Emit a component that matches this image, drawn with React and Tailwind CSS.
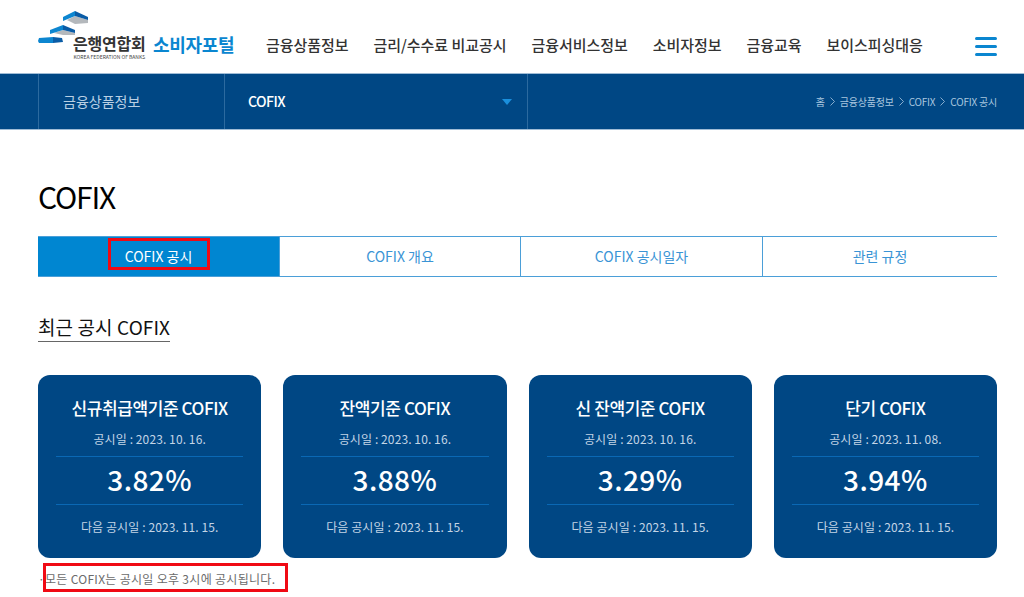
import React from "react";

const navItems = ["금융상품정보", "금리/수수료 비교공시", "금융서비스정보", "소비자정보", "금융교육", "보이스피싱대응"];
const tabs = ["COFIX 공시", "COFIX 개요", "COFIX 공시일자", "관련 규정"];
const crumbs = ["금융상품정보", "COFIX", "COFIX 공시"];
const cards = [
  { title: "신규취급액기준 COFIX", date: "2023. 10. 16.", rate: "3.82", next: "2023. 11. 15." },
  { title: "잔액기준 COFIX", date: "2023. 10. 16.", rate: "3.88", next: "2023. 11. 15." },
  { title: "신 잔액기준 COFIX", date: "2023. 10. 16.", rate: "3.29", next: "2023. 11. 15." },
  { title: "단기 COFIX", date: "2023. 11. 08.", rate: "3.94", next: "2023. 11. 15." },
];

function Logo() {
  return (
    <svg width="50" height="33" viewBox="0 0 50 33" className="block">
      <polygon points="29,9 37,5 50,9 50,12 37,13" fill="#b4b8bc" />
      <polygon points="25,6 37,0 37,5 25,10" fill="#0d86d0" />
      <polygon points="37,0 50,6 50,9 37,5" fill="#0a5ca6" />
      <polygon points="16,22 25,19 37,22 37,24 25,24" fill="#b4b8bc" />
      <polygon points="12,19 25,14 25,19 12,23" fill="#0d86d0" />
      <polygon points="25,14 37,19 37,22 25,19" fill="#0a5ca6" />
      <polygon points="1,27 15,26 15,32 1,32 0,30" fill="#0d86d0" />
      <polygon points="15,26 24,27 25,31 15,32" fill="#0a5ca6" />
    </svg>
  );
}

function Chevron() {
  return (
    <svg width="5" height="9" viewBox="0 0 5 9" fill="none" stroke="#a9c6df" strokeWidth="0.8">
      <path d="M0.5 0.5 L4.5 4.5 L0.5 8.5" />
    </svg>
  );
}

function Card({ title, date, rate, next }) {
  return (
    <div className="h-[183px] rounded-[12px] bg-[#004784] px-[18px] pt-[21px] text-center">
      <h3 className="text-[17px] leading-[24px] font-medium tracking-[-0.4px] text-white">{title}</h3>
      <p className="mt-[10px] h-[26px] text-[12px] leading-[18px] tracking-[0.1px] text-[#c3d5e6]">공시일 : {date}</p>
      <p className="flex h-[49px] items-center justify-center border-y border-[#0a68b4] pb-[4px] text-[28px] font-medium tracking-[0.4px] text-white">
        {rate}%
      </p>
      <p className="mt-[13px] text-[12px] leading-[18px] tracking-[0.1px] text-[#c3d5e6]">다음 공시일 : {next}</p>
    </div>
  );
}

export default function App() {
  return (
    <div className="relative h-[597px] w-[1024px] overflow-hidden bg-white font-['Noto_Sans_CJK_KR','Noto_Sans',sans-serif]">
      <header className="flex h-[73px] pl-[38px]">
        <div className="relative h-[73px] w-[228px] shrink-0">
          <div className="absolute top-[11px] left-0"><Logo /></div>
          <div className="absolute top-[32px] left-[35px] text-center">
            <div className="text-[16px] leading-[22px] font-bold tracking-[-0.2px] text-[#333]">은행연합회</div>
            <div className="text-[5px] leading-[6px] whitespace-nowrap text-[#444]">KOREA FEDERATION OF BANKS</div>
          </div>
          <div className="absolute top-[32px] left-[115px] text-[18px] leading-[24px] font-bold tracking-[-0.3px] text-[#0a86d0]">소비자포털</div>
        </div>
        <nav className="flex gap-[25px] pt-[34px] text-[15px] leading-[22px] font-medium tracking-[-0.05px] whitespace-nowrap text-[#333]">
          {navItems.map((item) => (
            <a key={item}>{item}</a>
          ))}
        </nav>
        <div className="absolute top-[37px] right-[27px] flex w-[22px] flex-col gap-[5px]">
          <span className="h-[3px] rounded-sm bg-[#0a86d0]" />
          <span className="h-[3px] rounded-sm bg-[#0a86d0]" />
          <span className="h-[3px] rounded-sm bg-[#0a86d0]" />
        </div>
      </header>

      <div className="flex h-[57px] items-stretch border-y border-[#9fbcd6] bg-[#004784] pr-[27px] pl-[38px]">
        <div className="flex w-[186px] items-center border-l border-[#2c6a9f] pl-[24px] text-[14px] text-[#b9d0e4]">금융상품정보</div>
        <div className="flex w-[304px] items-center justify-between border-x border-[#2c6a9f] pr-[15px] pl-[23px] text-[14px] font-medium tracking-[-0.5px] text-white">
          COFIX
          <span className="h-0 w-0 border-x-[5px] border-t-[6px] border-x-transparent border-t-[#1a8fdc]" />
        </div>
        <div className="ml-auto flex items-center gap-[5px] text-[10px] tracking-[-0.2px] text-[#a9c6df]">
          <span>홈</span>
          {crumbs.map((crumb) => (
            <React.Fragment key={crumb}>
              <Chevron />
              <span>{crumb}</span>
            </React.Fragment>
          ))}
        </div>
      </div>

      <main className="pr-[27px] pl-[38px]">
        <h1 className="mt-[44px] text-[30px] leading-[44px] font-normal tracking-[-1.2px] text-black">COFIX</h1>

        <div className="relative mt-[18px] grid h-[41px] grid-cols-[241px_241px_242px_235px] border-y border-[#4b9fd8] text-[14px]">
          {tabs.map((tab, i) => (
            <div
              key={tab}
              className={
                i === 0
                  ? "flex items-center justify-center bg-[#0086d1] text-white"
                  : "flex items-center justify-center border-l border-[#4b9fd8] text-[#3a94d5]"
              }
            >
              {tab}
            </div>
          ))}
          <div className="absolute top-[1px] left-[70px] h-[32px] w-[102px] border-[3px] border-[#f00a14]" />
        </div>

        <div className="mt-[36px]">
          <h2 className="inline-block border-b border-[#666] pb-[1px] text-[19px] leading-[27px] font-normal tracking-[0.1px] text-[#111]">최근 공시 COFIX</h2>
        </div>

        <div className="mt-[33px] grid grid-cols-4 gap-[22px]">
          {cards.map((card) => (
            <Card key={card.title} {...card} />
          ))}
        </div>

        <div className="relative mt-[12px] flex text-[12px] leading-[18px] tracking-[0.3px] text-[#6b6b6b]">
          <span className="w-[7px]">·</span>
          <span>모든 COFIX는 공시일 오후 3시에 공시됩니다.</span>
          <div className="absolute -top-[7px] left-[5px] h-[29px] w-[245px] border-[3px] border-[#f00a14]" />
        </div>
      </main>
    </div>
  );
}
